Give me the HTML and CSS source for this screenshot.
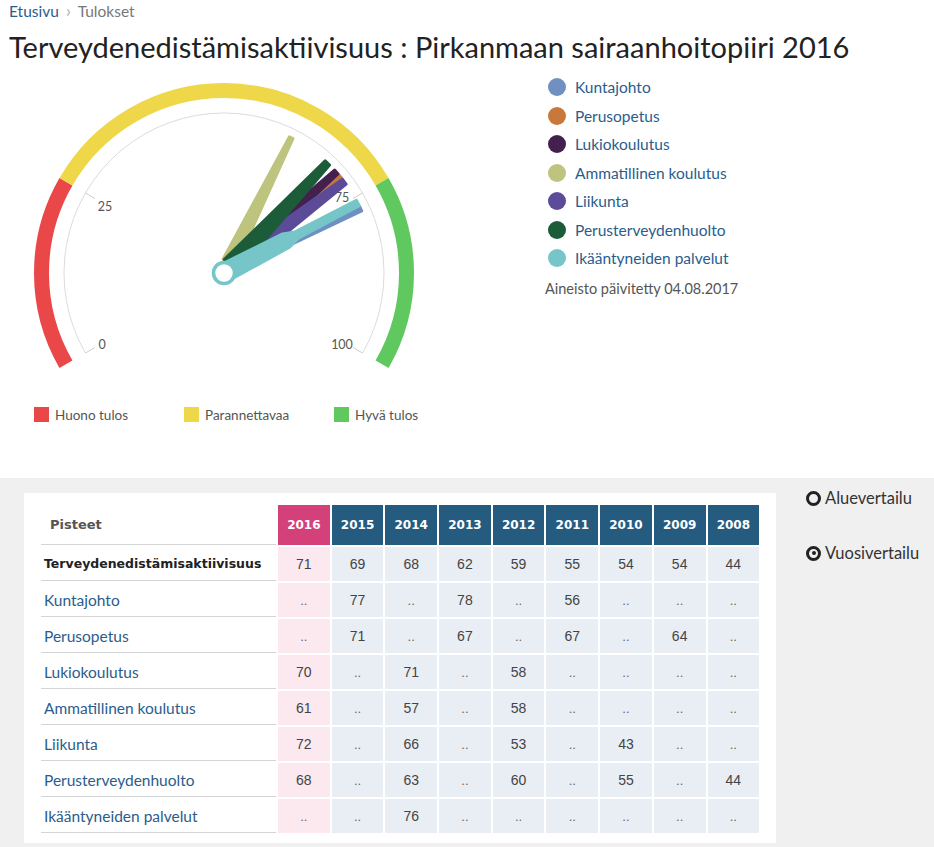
FILE: index.html
```html
<!DOCTYPE html>
<html lang="fi">
<head>
  <meta charset="UTF-8" />
  <title>Terveydenedistämisaktiivisuus</title>
  <link rel="stylesheet" href="styles.css">
</head>
<body>
  <div class="crumbs">
    <a href="#">Etusivu</a><span class="sep">›</span><span class="here">Tulokset</span>
  </div>
  <h1 class="title">Terveydenedistämisaktiivisuus : Pirkanmaan sairaanhoitopiiri 2016</h1>

  <div class="top">
    <div class="gauge-col">
      <svg class="gauge" width="450" height="330" viewBox="0 0 450 330">
        <!-- colour bands -->
        <path class="band red" d="M65.95 294.25 A182.5 182.5 0 0 1 65.95 111.75" />
        <path class="band yellow" d="M65.95 111.75 A182.5 182.5 0 0 1 382.05 111.75" />
        <path class="band green" d="M382.05 111.75 A182.5 182.5 0 0 1 382.05 294.25" />
        <!-- scale -->
        <path class="scale" d="M85.44 283 A160 160 0 1 1 362.56 283" />
        <line class="tick" x1="94.96" y1="277.5" x2="85.44" y2="283" />
        <line class="tick" x1="94.96" y1="128.5" x2="85.44" y2="123" />
        <line class="tick" x1="353.04" y1="128.5" x2="362.56" y2="123" />
        <line class="tick" x1="353.04" y1="277.5" x2="362.56" y2="283" />
        <text class="lbl" x="102" y="279">0</text>
        <text class="lbl" x="105" y="141">25</text>
        <text class="lbl" x="342" y="132">75</text>
        <text class="lbl" x="342" y="279">100</text>
        <!-- needles -->
        <g transform="translate(224 203)">
          <polygon class="needle c-kunta" transform="rotate(64.8)" points="-3,0 -2.5,-151 2.5,-151 3,0" />
          <polygon class="needle c-perus" transform="rotate(50.4)" points="-6,-10 -2.5,-151 2.5,-151 6,-10" />
          <polygon class="needle c-lukio" transform="rotate(48)" points="-6,-10 -2.5,-151 2.5,-151 6,-10" />
          <polygon class="needle c-amm" transform="rotate(26.4)" points="-7,-12 -2,-151 2,-151 7,-12" />
          <polygon class="needle c-liik" transform="rotate(52.8)" points="-8,-10 -3,-151 3,-151 8,-10" />
          <polygon class="needle c-ter" transform="rotate(43.2)" points="-9,-10 -3,-151 3,-151 9,-10" />
          <polygon class="needle c-ika" transform="rotate(62.4)" points="-9,0 -7.5,-70 -3.5,-82 -3,-151 3,-151 3.5,-82 7.5,-70 9,0" />
          <circle class="pivot" cx="0" cy="0" r="10.5" />
        </g>
      </svg>
      <div class="zones">
        <span class="zone"><i class="sq red"></i>Huono tulos</span>
        <span class="zone"><i class="sq yellow"></i>Parannettavaa</span>
        <span class="zone"><i class="sq green"></i>Hyvä tulos</span>
      </div>
    </div>

    <div class="series">
      <ul class="series-list">
        <li><span class="dot c-kunta"></span><a href="#">Kuntajohto</a></li>
        <li><span class="dot c-perus"></span><a href="#">Perusopetus</a></li>
        <li><span class="dot c-lukio"></span><a href="#">Lukiokoulutus</a></li>
        <li><span class="dot c-amm"></span><a href="#">Ammatillinen koulutus</a></li>
        <li><span class="dot c-liik"></span><a href="#">Liikunta</a></li>
        <li><span class="dot c-ter"></span><a href="#">Perusterveydenhuolto</a></li>
        <li><span class="dot c-ika"></span><a href="#">Ikääntyneiden palvelut</a></li>
      </ul>
      <p class="updated">Aineisto päivitetty 04.08.2017</p>
    </div>
  </div>

  <div class="bottom">
    <div class="card">
      <table class="scores">
        <colgroup>
          <col class="col-label">
          <col span="9" class="col-year">
        </colgroup>
        <thead>
          <tr>
            <th class="head-label">Pisteet</th>
            <th class="yr current">2016</th>
            <th class="yr">2015</th>
            <th class="yr">2014</th>
            <th class="yr">2013</th>
            <th class="yr">2012</th>
            <th class="yr">2011</th>
            <th class="yr">2010</th>
            <th class="yr">2009</th>
            <th class="yr">2008</th>
          </tr>
        </thead>
        <tbody>
          <tr class="total">
            <td class="name">Terveydenedistämisaktiivisuus</td>
            <td class="v current">71</td><td class="v">69</td><td class="v">68</td><td class="v">62</td><td class="v">59</td><td class="v">55</td><td class="v">54</td><td class="v">54</td><td class="v">44</td>
          </tr>
          <tr>
            <td class="name"><a href="#">Kuntajohto</a></td>
            <td class="v current na">..</td><td class="v">77</td><td class="v na">..</td><td class="v">78</td><td class="v na">..</td><td class="v">56</td><td class="v na">..</td><td class="v na">..</td><td class="v na">..</td>
          </tr>
          <tr>
            <td class="name"><a href="#">Perusopetus</a></td>
            <td class="v current na">..</td><td class="v">71</td><td class="v na">..</td><td class="v">67</td><td class="v na">..</td><td class="v">67</td><td class="v na">..</td><td class="v">64</td><td class="v na">..</td>
          </tr>
          <tr>
            <td class="name"><a href="#">Lukiokoulutus</a></td>
            <td class="v current">70</td><td class="v na">..</td><td class="v">71</td><td class="v na">..</td><td class="v">58</td><td class="v na">..</td><td class="v na">..</td><td class="v na">..</td><td class="v na">..</td>
          </tr>
          <tr>
            <td class="name"><a href="#">Ammatillinen koulutus</a></td>
            <td class="v current">61</td><td class="v na">..</td><td class="v">57</td><td class="v na">..</td><td class="v">58</td><td class="v na">..</td><td class="v na">..</td><td class="v na">..</td><td class="v na">..</td>
          </tr>
          <tr>
            <td class="name"><a href="#">Liikunta</a></td>
            <td class="v current">72</td><td class="v na">..</td><td class="v">66</td><td class="v na">..</td><td class="v">53</td><td class="v na">..</td><td class="v">43</td><td class="v na">..</td><td class="v na">..</td>
          </tr>
          <tr>
            <td class="name"><a href="#">Perusterveydenhuolto</a></td>
            <td class="v current">68</td><td class="v na">..</td><td class="v">63</td><td class="v na">..</td><td class="v">60</td><td class="v na">..</td><td class="v">55</td><td class="v na">..</td><td class="v">44</td>
          </tr>
          <tr>
            <td class="name"><a href="#">Ikääntyneiden palvelut</a></td>
            <td class="v current na">..</td><td class="v na">..</td><td class="v">76</td><td class="v na">..</td><td class="v na">..</td><td class="v na">..</td><td class="v na">..</td><td class="v na">..</td><td class="v na">..</td>
          </tr>
        </tbody>
      </table>
    </div>

    <div class="views">
      <label class="radio"><span class="ring"></span>Aluevertailu</label>
      <label class="radio"><span class="ring checked"></span>Vuosivertailu</label>
    </div>
  </div>
</body>
</html>
```

FILE: styles.css
```css
body {
  margin: 0;
  font-family: Lato, "Noto Sans", sans-serif;
  color: #333;
  background: #fff;
}

a {
  color: #2b5d8c;
  text-decoration: none;
}

.crumbs {
  height: 22px;
  padding-left: 9px;
  font-size: 15.5px;
  line-height: 22px;
}

.crumbs .sep {
  color: #aaa;
  margin: 0 7px;
  font-size: 17px;
}

.crumbs .here {
  color: #777;
}

.title {
  margin: 0;
  height: 48px;
  padding-left: 9px;
  font-size: 29px;
  font-weight: 400;
  line-height: 50px;
  color: #222;
  white-space: nowrap;
}

/* gauge + legend */
.top {
  display: flex;
  padding-bottom: 48px;
}

.gauge-col {
  width: 450px;
  flex-shrink: 0;
}

.gauge {
  display: block;
}

.band {
  fill: none;
  stroke-width: 15;
}

.band.red { stroke: #ea4748; }
.band.yellow { stroke: #efd74a; }
.band.green { stroke: #5fc95f; }

.scale {
  fill: none;
  stroke: #dcdcdc;
  stroke-width: 1;
}

.tick {
  stroke: #ccc;
  stroke-width: 1;
}

.lbl {
  font-family: Lato, sans-serif;
  font-size: 12.5px;
  fill: #555;
  text-anchor: middle;
}

.needle {
  stroke-width: 3;
  stroke-linejoin: round;
}

.pivot {
  fill: #fff;
  stroke: #76c5c8;
  stroke-width: 3.5;
}

.c-kunta { fill: #6f90c0; stroke: #6f90c0; background: #6f90c0; }
.c-perus { fill: #c8783a; stroke: #c8783a; background: #c8783a; }
.c-lukio { fill: #43204e; stroke: #43204e; background: #43204e; }
.c-amm { fill: #bec47e; stroke: #bec47e; background: #bec47e; }
.c-liik { fill: #5b4b98; stroke: #5b4b98; background: #5b4b98; }
.c-ter { fill: #1c5c38; stroke: #1c5c38; background: #1c5c38; }
.c-ika { fill: #76c5c8; stroke: #76c5c8; background: #76c5c8; }

.zones {
  display: flex;
  height: 30px;
  padding: 7px 0 0 34px;
  box-sizing: border-box;
  font-size: 13.5px;
  color: #555;
}

.zone {
  display: flex;
  align-items: center;
  flex-shrink: 0;
  width: 150px;
  height: 15px;
}

.sq {
  width: 15px;
  height: 15px;
  margin-right: 6px;
}

.sq.red { background: #ea4748; }
.sq.yellow { background: #efd74a; }
.sq.green { background: #5fc95f; }

.series {
  margin-left: 95px;
}

.series-list {
  list-style: none;
  margin: 3px 0 0;
  padding: 0;
}

.series-list li {
  display: flex;
  align-items: center;
  height: 28.5px;
  font-size: 15.5px;
}

.dot {
  width: 18px;
  height: 18px;
  border-radius: 50%;
  margin: 0 9px 0 3px;
}

.updated {
  margin: 2px 0 0;
  line-height: 28px;
  font-size: 14.5px;
  color: #555;
}

/* table section */
.bottom {
  display: flex;
  align-items: flex-start;
  background: #f0f0f0;
  padding: 15px 0 4px 24px;
}

.card {
  width: 752px;
  box-sizing: border-box;
  background: #fff;
  padding: 12px 0 10px 17px;
}

.scores {
  table-layout: fixed;
  border-collapse: separate;
  border-spacing: 2px;
  margin: -2px;
  width: 722px;
}

.col-label { width: 235px; }
.col-year { width: 51.7px; }

.scores th {
  height: 39px;
  padding: 0;
}

.head-label {
  text-align: left;
  padding-left: 9px !important;
  border-bottom: 1px solid #d4d4d4;
  font-family: "DejaVu Sans", sans-serif;
  font-size: 13px;
  color: #555;
}

.yr {
  background: #265b80;
  color: #fff;
  font-family: "DejaVu Sans", sans-serif;
  font-size: 12px;
  font-weight: bold;
}

.yr.current {
  background: #d4417a;
}

.scores td {
  height: 33px;
  padding: 0;
}

.name {
  padding-left: 3px !important;
  border-bottom: 1px solid #d4d4d4;
  font-size: 15.5px;
  white-space: nowrap;
}

.total .name {
  font-family: "DejaVu Sans", sans-serif;
  font-size: 12.5px;
  font-weight: bold;
  color: #222;
}

.v {
  background: #e9eef4;
  text-align: center;
  font-family: "Liberation Sans", Arial, sans-serif;
  font-size: 14px;
  color: #444;
}

.v.current {
  background: #fbe9ef;
}

.v.na {
  color: #666;
  font-size: 13px;
}

.views {
  margin: -6px 0 0 30px;
}

.radio {
  display: flex;
  align-items: center;
  height: 22px;
  margin-bottom: 33px;
  font-size: 16.5px;
  color: #333;
}

.ring {
  width: 15px;
  height: 15px;
  box-sizing: border-box;
  border: 3px solid #222;
  border-radius: 50%;
  margin-right: 4px;
  position: relative;
}

.ring.checked::after {
  content: "";
  position: absolute;
  left: 2.5px;
  top: 2.5px;
  width: 4px;
  height: 4px;
  border-radius: 50%;
  background: #222;
}
```
